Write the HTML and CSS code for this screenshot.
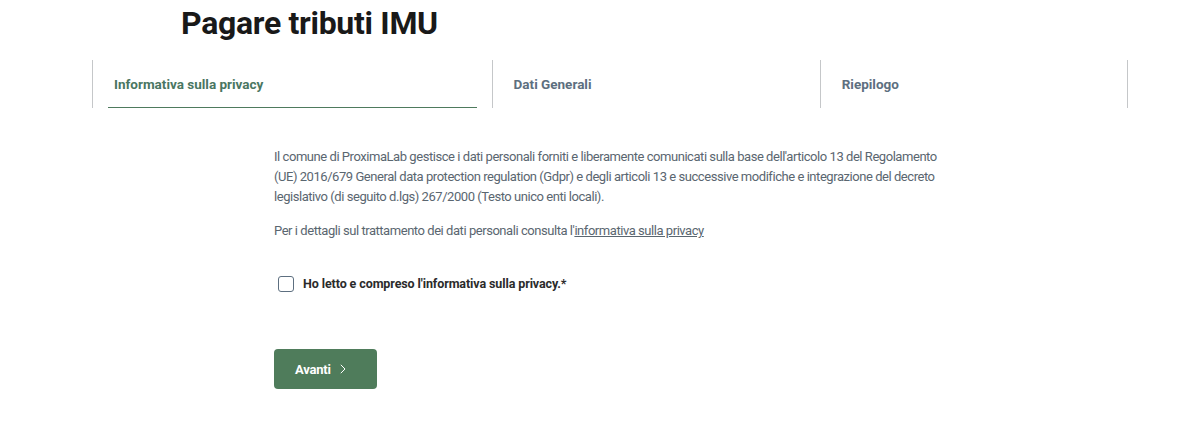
FILE: index.html
```html
<!DOCTYPE html>
<html lang="it">
<head>
    <meta charset="UTF-8">
    <meta name="viewport" content="width=device-width, initial-scale=1.0">
    <title>Pagare tributi IMU</title>
    <link rel="stylesheet" href="styles.css">
</head>
<body>
    <div class="page">
        <h1 class="title">Pagare tributi IMU</h1>

        <ul class="steps">
            <li class="step active"><a href="#">Informativa sulla privacy</a></li>
            <li class="step"><a href="#">Dati Generali</a></li>
            <li class="step"><a href="#">Riepilogo</a></li>
        </ul>

        <div class="content">
            <p>Il comune di ProximaLab gestisce i dati personali forniti e liberamente comunicati sulla base dell'articolo 13 del Regolamento (UE) 2016/679 General data protection regulation (Gdpr) e degli articoli 13 e successive modifiche e integrazione del decreto legislativo (di seguito d.lgs) 267/2000 (Testo unico enti locali).</p>
            <p>Per i dettagli sul trattamento dei dati personali consulta l'<a href="#">informativa sulla privacy</a></p>

            <label class="check">
                <input type="checkbox">
                <span>Ho letto e compreso l'informativa sulla privacy.*</span>
            </label>

            <button class="btn-next">
                Avanti
                <svg class="chevron" width="6" height="10" viewBox="0 0 6 10">
                    <polyline points="0.8,0.8 5,5 0.8,9.2" fill="none" stroke="#fff" stroke-width="1"/>
                </svg>
            </button>
        </div>
    </div>
</body>
</html>
```

FILE: styles.css
```css
body {
    margin: 0;
    background: #fff;
    font-family: "Roboto", sans-serif;
    color: #1a1a1a;
}

.page {
    width: 1036px;
    margin-left: 92px;
}

.title {
    margin: 0 0 0 89px;
    padding-top: 2px;
    font-size: 32px;
    line-height: 42px;
    font-weight: 700;
    letter-spacing: -0.3px;
    color: #191919;
}

.steps {
    display: flex;
    list-style: none;
    margin: 16px 0 0;
    padding: 0;
}

.step {
    flex: 1 1 auto;
    border-left: 1px solid #c5c7c9;
    padding: 0 15px;
}

.step:last-child {
    border-right: 1px solid #c5c7c9;
}

.step a {
    display: block;
    height: 47px;
    line-height: 48px;
    padding: 0 6px;
    font-size: 13.5px;
    font-weight: 700;
    color: #5d6f80;
    text-decoration: none;
}

.step.active a {
    color: #4a7662;
    border-bottom: 1px solid #4e7a5d;
}

.content {
    margin: 39px 0 0 182px;
    width: 676px;
    font-size: 13px;
    line-height: 20px;
    letter-spacing: -0.45px;
    color: #5a6670;
}

.content p {
    margin: 0 0 14px;
}

.content p a {
    color: #5a6670;
}

.check {
    display: flex;
    align-items: center;
    gap: 9px;
    margin: 33px 0 0 4px;
    font-size: 12.5px;
    line-height: 20px;
    letter-spacing: -0.1px;
    font-weight: 700;
    color: #2b2b2b;
}

.check input {
    appearance: none;
    width: 16px;
    height: 16px;
    margin: 0;
    border: 1.5px solid #5d6f80;
    border-radius: 3px;
}

.btn-next {
    display: flex;
    align-items: center;
    gap: 9px;
    margin-top: 55px;
    width: 103px;
    height: 40px;
    border: none;
    border-radius: 4px;
    background: #4f7c5b;
    color: #fff;
    font-family: inherit;
    font-size: 13px;
    font-weight: 700;
    letter-spacing: -0.2px;
    padding: 0 0 0 21px;
}
```
